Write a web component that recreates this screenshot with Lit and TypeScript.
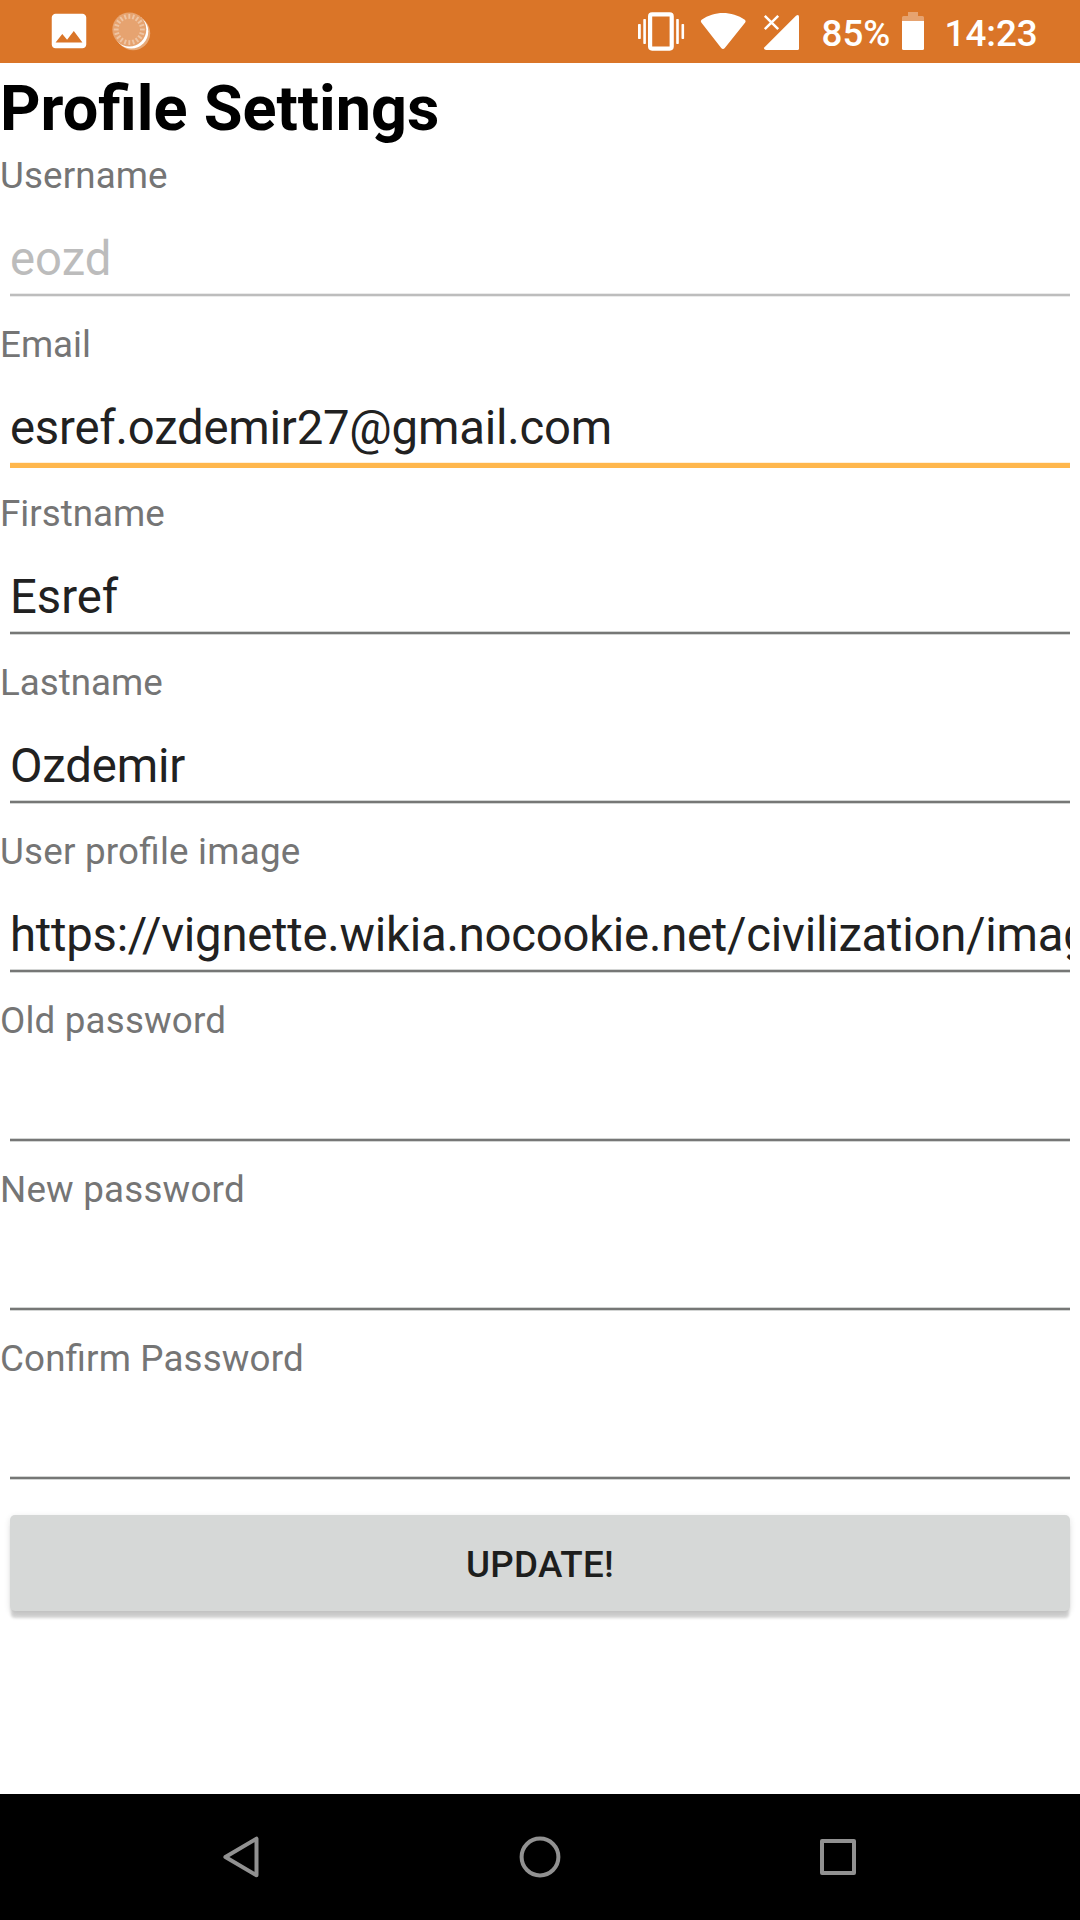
import { LitElement, html, svg, css, nothing } from "lit";
import { customElement, property } from "lit/decorators.js";
import { styleMap } from "lit/directives/style-map.js";

interface Field {
  label: string;
  value: string;
  state: "normal" | "disabled" | "focused";
  /** Tracking of the label and of the value, in pixels. */
  labelTracking: number;
  valueTracking: number;
}

const FIELDS: Field[] = [
  { label: "Username", value: "eozd", state: "disabled", labelTracking: 0.12, valueTracking: 0 },
  { label: "Email", value: "esref.ozdemir27@gmail.com", state: "focused", labelTracking: 0, valueTracking: -0.2 },
  { label: "Firstname", value: "Esref", state: "normal", labelTracking: 0, valueTracking: 0 },
  { label: "Lastname", value: "Ozdemir", state: "normal", labelTracking: 0, valueTracking: -0.15 },
  { label: "User profile image", value: "https://vignette.wikia.nocookie.net/civilization/imag", state: "normal", labelTracking: 0.22, valueTracking: -0.24 },
  { label: "Old password", value: "", state: "normal", labelTracking: 0.18, valueTracking: 0 },
  { label: "New password", value: "", state: "normal", labelTracking: 0.2, valueTracking: 0 },
  { label: "Confirm Password", value: "", state: "normal", labelTracking: 0.14, valueTracking: 0 },
];

const TICKS = Array.from({ length: 20 }, (_, i) => i * 18);

@customElement("status-bar")
class StatusBar extends LitElement {
  static styles = css`
    :host {
      display: flex;
      height: 63px;
      background: #da7528;
      color: #fff;
      font: 500 36.75px/63px Roboto, sans-serif;
    }
    svg { display: block; flex: none; height: 63px; }
    .photo { width: 46px; height: 46px; margin: 8.4px 0 0 45.5px; }
    .spinner { width: 42px; margin-left: 18.5px; }
    .right { display: flex; margin-left: auto; padding-right: 42px; }
    .vibrate { width: 48px; }
    .wifi { width: 48px; margin-left: 14px; }
    .signal { width: 37px; margin-left: 16px; }
    .percent { width: 80px; margin-left: 21.5px; padding-top: 2px; height: 61px; white-space: nowrap; }
    .battery { width: 22px; margin-left: 0.5px; }
    .time { width: 93.5px; margin-left: 20.5px; padding-top: 2px; height: 61px; white-space: nowrap; }
  `;

  render() {
    return html`
      <svg class="photo" viewBox="0 0 24 24" fill="#fff">
        <path d="M21 19V5c0-1.1-.9-2-2-2H5c-1.1 0-2 .9-2 2v14c0 1.1.9 2 2 2h14c1.1 0 2-.9 2-2zM8.500 13.500l2.500 3.010L14.500 12l4.500 6H5l3.500-4.500z" />
      </svg>
      <svg class="spinner" viewBox="110 0 42 63">
        <circle cx="133.200" cy="33.200" r="17" fill="#e8a977" />
        <circle cx="131.300" cy="31.500" r="17" fill="#fff" />
        <circle cx="129.300" cy="29.500" r="17" fill="#e6a370" />
        ${TICKS.map(
          (a) => svg`<line x1="129.300" y1="18.800" x2="129.300" y2="14" stroke="#efc5a3" stroke-width="1.900" transform="rotate(${a} 129.300 29.500)" />`
        )}
      </svg>
      <div class="right">
        <svg class="vibrate" viewBox="637 0 48 63" fill="#fff">
          <rect x="650.100" y="14.400" width="21.600" height="34.200" rx="2" fill="none" stroke="#fff" stroke-width="4.200" />
          <rect x="643.300" y="19" width="2.600" height="25" rx=".7" />
          <rect x="638" y="24" width="2.800" height="15" rx=".7" />
          <rect x="676.200" y="19" width="2.600" height="25" rx=".7" />
          <rect x="681.500" y="24" width="2.600" height="15" rx=".7" />
        </svg>
        <svg class="wifi" viewBox="699 0 48 63" fill="#fff">
          <path d="M701.300 22.500Q700 21 701.600 19.800C708 15.200 715.500 13 723 13S738.500 15.200 744.800 19.800Q746.400 21 745.200 22.500L724.800 48Q723 50 721.200 48Z" />
        </svg>
        <svg class="signal" viewBox="763 0 37 63" fill="#fff">
          <path d="M764.500 47.200 796 15.700Q799 13.800 799 17V48.500Q799 50 797.500 50H766Q763 49.300 764.500 47.200Z" />
          <path d="M764.800 15.800 778.200 29.200M778.200 15.800 764.800 29.200" stroke="#fff" stroke-width="2.500" />
        </svg>
        <span class="percent">85%</span>
        <svg class="battery" viewBox="902 0 22 63">
          <path d="M902 21V17.500Q902 16 903.500 16H908V12H918V16H922.500Q924 16 924 17.500V21Z" fill="#e6a370" />
          <path d="M902 21H924V48.500Q924 50 922.500 50H903.500Q902 50 902 48.500Z" fill="#fff" />
        </svg>
        <span class="time">14:23</span>
      </div>
    `;
  }
}

@customElement("form-field")
class FormField extends LitElement {
  @property() label = "";
  @property() value = "";
  @property({ reflect: true }) state = "normal";
  @property({ type: Number }) labelTracking = 0;
  @property({ type: Number }) valueTracking = 0;

  static styles = css`
    :host { display: block; height: 169px; }
    .label {
      padding-top: 4px;
      font-size: 36.75px;
      line-height: 49px;
      color: #757575;
      font-feature-settings: "liga" 1;
    }
    .entry {
      height: 56px;
      margin: 0 10px;
      padding-top: 31px;
      padding-bottom: 6px;
      font-size: 47.25px;
      line-height: 56px;
      color: #212121;
      white-space: nowrap;
      overflow: hidden;
    }
    .line {
      height: 2px;
      margin: 0 10px;
      background: #767776;
      border: solid #d3d5d4;
      border-width: 1px 0;
    }
    :host([state="disabled"]) .entry { color: #bcbcbc; }
    :host([state="disabled"]) .line { background: #bdbdbd; border-color: #ebebeb; }
    :host([state="focused"]) .line { height: 5px; background: #ffb74d; border-color: #fff1dc; border-width: 1px 0 0; }
  `;

  render() {
    return html`
      <div class="label" style=${styleMap({ letterSpacing: `${this.labelTracking}px` })}>${this.label}</div>
      <div class="entry" style=${styleMap({ letterSpacing: `${this.valueTracking}px` })}>${this.value || nothing}</div>
      <div class="line"></div>
    `;
  }
}

@customElement("nav-bar")
class NavBar extends LitElement {
  static styles = css`
    :host {
      display: flex;
      align-items: center;
      justify-content: space-between;
      box-sizing: border-box;
      height: 126px;
      padding: 0 217px;
      background: #000;
    }
    svg { display: block; width: 50px; height: 50px; fill: none; stroke: #919191; stroke-width: 4; stroke-linejoin: round; }
  `;

  render() {
    return html`
      <svg viewBox="0 0 50 50"><path d="M39.500 6.700V43.300L8.400 25Z" /></svg>
      <svg viewBox="0 0 50 50"><circle cx="25" cy="25" r="18.400" /></svg>
      <svg viewBox="0 0 50 50"><rect x="9" y="9" width="32" height="32" /></svg>
    `;
  }
}

@customElement("app-root")
class AppRoot extends LitElement {
  static styles = css`
    :host {
      display: flex;
      flex-direction: column;
      width: 1080px;
      height: 1920px;
      overflow: hidden;
      background: #fff;
      font-family: Roboto, sans-serif;
    }
    .content { flex: 1; min-height: 0; }
    .title {
      margin: 0;
      padding-top: 7px;
      font-size: 63px;
      font-weight: 700;
      line-height: 77px;
      word-spacing: 0.6px;
      color: #000;
    }
    .update {
      display: block;
      box-sizing: border-box;
      width: 1060px;
      height: 96px;
      margin: 16px 10px 0;
      padding: 3px 0 0;
      border: 0;
      border-radius: 5px;
      background: #d6d8d7;
      box-shadow: 0 8px 3px -1px rgba(0, 0, 0, 0.17), 0 2px 6px rgba(0, 0, 0, 0.12);
      color: #1d1e1d;
      font: 500 36.75px/93px Roboto, sans-serif;
      letter-spacing: 0.3px;
    }
  `;

  render() {
    return html`
      <status-bar></status-bar>
      <main class="content">
        <h1 class="title">Profile Settings</h1>
        ${FIELDS.map(
          (f) => html`<form-field
            .label=${f.label}
            .value=${f.value}
            .state=${f.state}
            .labelTracking=${f.labelTracking}
            .valueTracking=${f.valueTracking}
          ></form-field>`
        )}
        <button class="update">UPDATE!</button>
      </main>
      <nav-bar></nav-bar>
    `;
  }
}
